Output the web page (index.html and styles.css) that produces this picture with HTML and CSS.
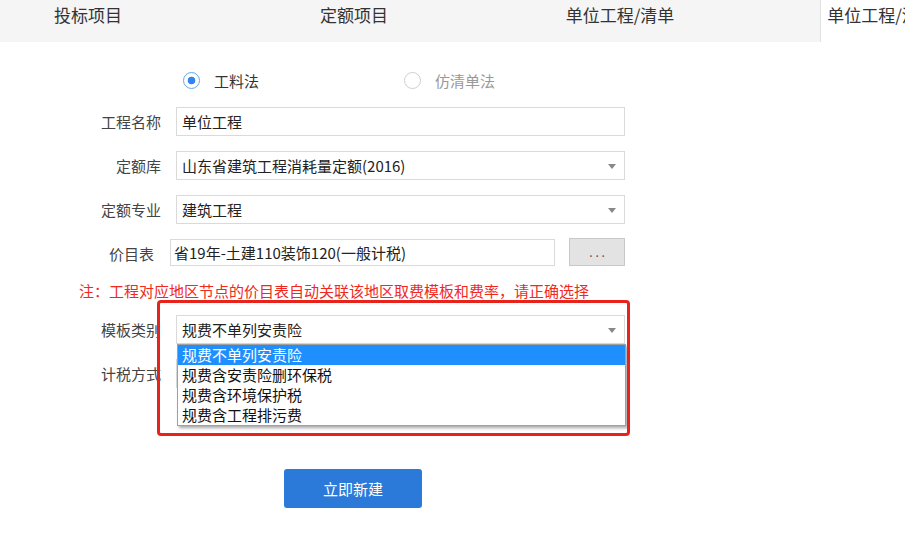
FILE: index.html
```html
<!DOCTYPE html>
<html lang="zh">
<head>
  <meta charset="UTF-8" />
  <title>新建项目</title>
  <link rel="stylesheet" href="styles.css">
</head>
<body>
  <div class="tabs">
    <div class="tab">投标项目</div>
    <div class="tab">定额项目</div>
    <div class="tab">单位工程/清单</div>
    <div class="tab"><span class="tab-active">单位工程/清单</span></div>
  </div>

  <div class="form">
    <div class="label"></div>
    <div class="radios">
      <label class="radio checked"><span class="dot"></span>工料法</label>
      <label class="radio off"><span class="dot"></span>仿清单法</label>
    </div>

    <div class="label">工程名称</div>
    <div class="field">单位工程</div>

    <div class="label">定额库</div>
    <div class="field select">山东省建筑工程消耗量定额(2016)<i class="arrow"></i></div>

    <div class="label">定额专业</div>
    <div class="field select">建筑工程<i class="arrow"></i></div>

    <div class="label label-price">价目表</div>
    <div class="price">
      <div class="field price-input">省19年-土建110装饰120(一般计税)</div>
      <div class="more">. . .</div>
    </div>

    <div class="note">注：工程对应地区节点的价目表自动关联该地区取费模板和费率，请正确选择</div>

    <div class="label">模板类别</div>
    <div class="field select open">规费不单列安责险<i class="arrow"></i>
      <ul class="dropdown">
        <li class="active">规费不单列安责险</li>
        <li>规费含安责险删环保税</li>
        <li>规费含环境保护税</li>
        <li>规费含工程排污费</li>
      </ul>
    </div>

    <div class="label">计税方式</div>
    <div class="field select">一般计税<i class="arrow"></i></div>

    <div class="label"></div>
    <div><button class="submit">立即新建</button></div>
  </div>

  <div class="mark"></div>
</body>
</html>
```

FILE: styles.css
```css
body {
  margin: 0;
  font-family: "Noto Sans CJK SC", "Noto Sans", sans-serif;
  background: #fff;
  color: #333;
  overflow: hidden;
}

.tabs {
  display: flex;
  height: 42px;
  background: #f5f5f5;
  margin-left: -45px;
  overflow: hidden;
}

.tab {
  flex: 0 0 266px;
  text-align: center;
  font-size: 17px;
  line-height: 30px;
  color: #333;
  white-space: nowrap;
}

.tab-active {
  display: inline-block;
  height: 42px;
  padding: 0 6px;
  margin-right: 10px;
  background: #fff;
  border-left: 1px solid #e2e2e2;
}

.form {
  display: grid;
  grid-template-columns: 161px 449px;
  column-gap: 15px;
  row-gap: 15px;
  margin-top: 26px;
  font-size: 15px;
}

.label {
  text-align: right;
  line-height: 29px;
  color: #444;
}

.label-price {
  padding-right: 7px;
}

.radios {
  display: flex;
  height: 24px;
  align-items: center;
  margin-left: 7px;
}

.radio {
  display: flex;
  align-items: center;
  width: 224px;
  color: #333;
}

.radio .dot {
  width: 17px;
  height: 17px;
  border: 1px solid #cfcfcf;
  border-radius: 50%;
  margin-right: 14px;
  box-sizing: border-box;
}

.radio.checked .dot {
  border: 1px solid #6aa5ea;
  background: radial-gradient(circle, #2f86ee 0 3.5px, #fff 4.2px);
}

.radio.off {
  color: #999;
}

.field {
  position: relative;
  height: 29px;
  line-height: 27px;
  border: 1px solid #dadada;
  box-sizing: border-box;
  padding-left: 5px;
  color: #222;
  background: #fff;
}

.arrow {
  position: absolute;
  right: 8px;
  top: 12px;
  border-left: 4px solid transparent;
  border-right: 4px solid transparent;
  border-top: 5px solid #888;
}

.price {
  display: flex;
  margin-left: -6px;
  gap: 14px;
}

.price-input {
  width: 386px;
  height: 27px;
  line-height: 25px;
  padding-left: 3px;
}

.more {
  width: 56px;
  height: 28px;
  box-sizing: border-box;
  border: 1px solid #c8c8c8;
  background: #e3e3e3;
  text-align: center;
  line-height: 26px;
  font-size: 12px;
  color: #555;
  margin-top: -1px;
}

.note {
  grid-column: 1 / 3;
  margin: -2px 0 -1px 79px;
  line-height: 20px;
  color: #f0281e;
  white-space: nowrap;
}

.dropdown {
  position: absolute;
  left: 0;
  top: 28px;
  width: 449px;
  margin: 0;
  padding: 0;
  list-style: none;
  background: #fff;
  border: 1px solid #a0a0a0;
  box-sizing: border-box;
  box-shadow: 2px 2px 3px rgba(0, 0, 0, 0.35);
  z-index: 2;
}

.dropdown li {
  line-height: 20px;
  padding-left: 4px;
  color: #111;
}

.dropdown li.active {
  background: #1e8fff;
  color: #fff;
}

.submit {
  margin: 66px 0 0 108px;
  width: 138px;
  height: 39px;
  border: none;
  border-radius: 3px;
  background: #2b7ad9;
  color: #fff;
  font-family: inherit;
  font-size: 15px;
}

.mark {
  position: absolute;
  left: 157px;
  top: 300px;
  width: 473px;
  height: 136px;
  box-sizing: border-box;
  border: 3px solid #e8231c;
  border-radius: 4px;
  z-index: 3;
}
```
